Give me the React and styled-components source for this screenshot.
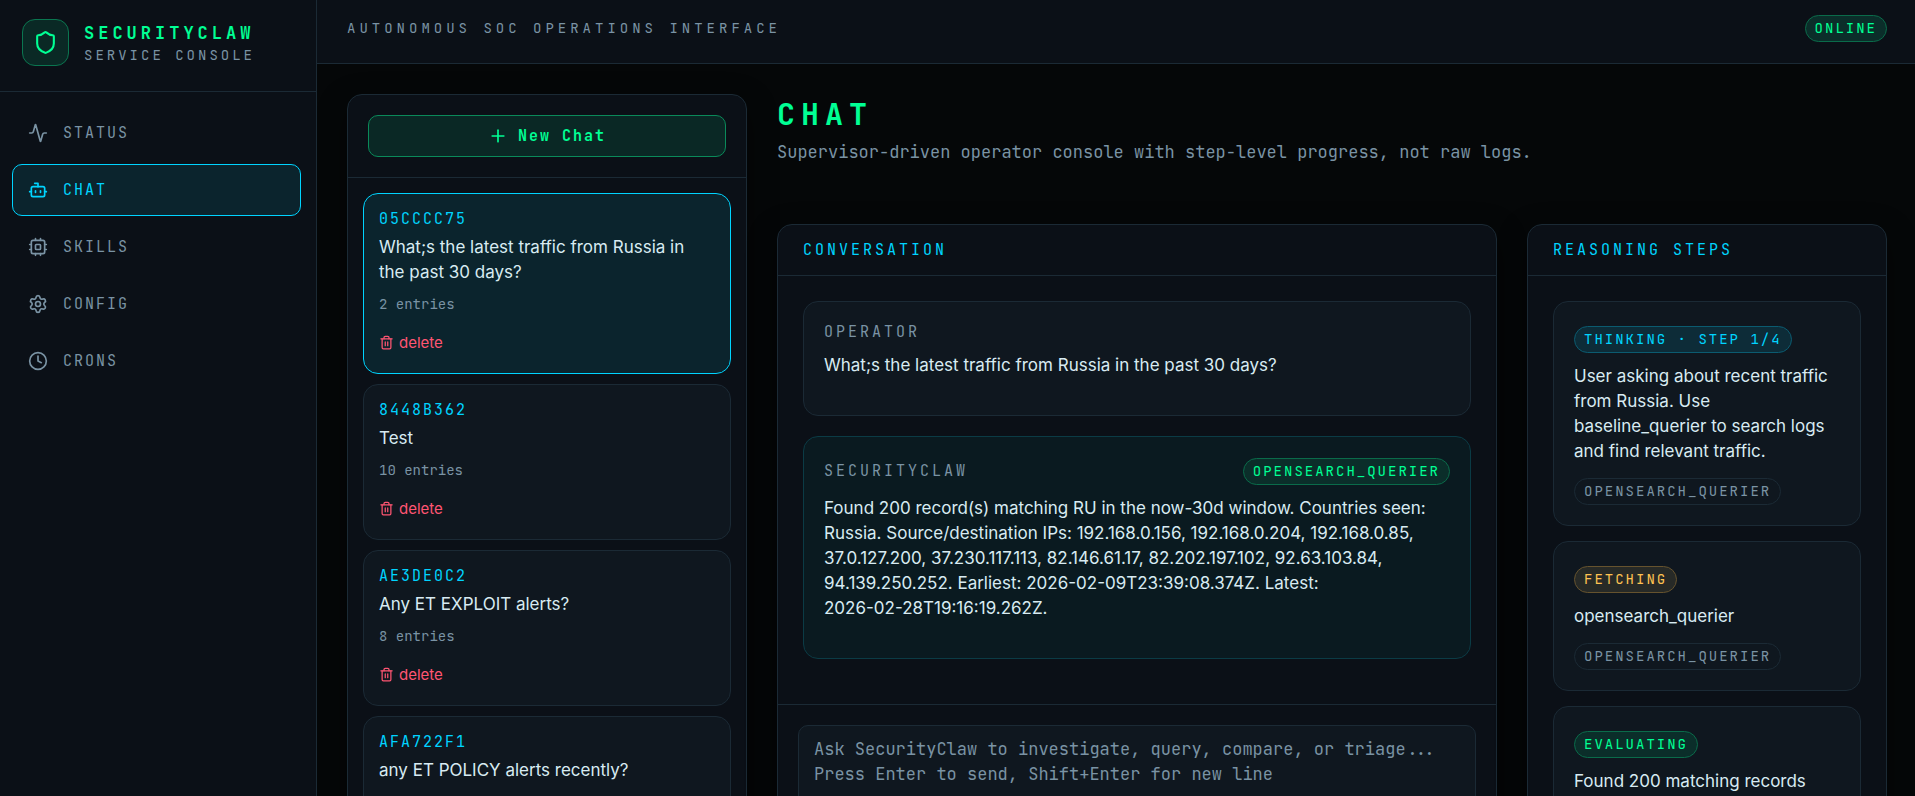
import React, { useState } from 'react';
import styled, { createGlobalStyle, css } from 'styled-components';
import { Activity, Bot, Clock, Cpu, Plus, Settings, Shield, Trash2 } from 'lucide-react';

const colors = {
  bg: '#050708',
  panel: '#0b1017',
  card: '#0f171f',
  border: '#1b2a35',
  text: '#d8ebf2',
  muted: '#7a93a4',
  cyan: '#00d4ff',
  green: '#00ff94',
  amber: '#ffc252',
  red: '#ff5572',
};

const mono = `'JetBrains Mono', 'DejaVu Sans Mono', 'Liberation Mono', monospace`;
const sans = `Inter, 'Liberation Sans', sans-serif`;

const GlobalStyle = createGlobalStyle`
  * {
    box-sizing: border-box;
  }

  body {
    margin: 0;
    background: ${colors.bg};
    color: ${colors.text};
    font-family: ${sans};
    font-size: 17px;
    line-height: 25px;
  }

  button, textarea {
    font: inherit;
  }

  h1, h2, p {
    margin: 0;
  }
`;

const Shell = styled.div`
  display: flex;
  height: 100vh;
  overflow: hidden;
`;

// sidebar

const Sidebar = styled.aside`
  width: 317px;
  flex-shrink: 0;
  background: ${colors.panel};
  border-right: 1px solid ${colors.border};
`;

const Brand = styled.div`
  display: flex;
  align-items: center;
  gap: 15px;
  padding: 19px 22px 25px;
  border-bottom: 1px solid ${colors.border};
`;

const BrandIcon = styled.div`
  display: flex;
  align-items: center;
  justify-content: center;
  width: 47px;
  height: 47px;
  border: 1px solid #0a7650;
  border-radius: 13px;
  background: #0a2925;
  color: ${colors.green};
`;

const BrandName = styled.div`
  font-family: ${mono};
  font-weight: 700;
  line-height: 24px;
  letter-spacing: 4px;
  color: ${colors.green};
`;

const BrandSub = styled.div`
  font-family: ${mono};
  font-size: 14px;
  line-height: 20px;
  letter-spacing: 3px;
  color: ${colors.muted};
`;

const Nav = styled.nav`
  display: flex;
  flex-direction: column;
  gap: 5px;
  padding: 15px 15px 15px 12px;
`;

const NavLink = styled.a`
  display: flex;
  align-items: center;
  gap: 15px;
  height: 52px;
  padding: 0 15px;
  border: 1px solid transparent;
  border-radius: 10px;
  font-family: ${mono};
  font-size: 15px;
  letter-spacing: 2px;
  text-decoration: none;
  color: ${colors.muted};

  ${({ $active }) => $active && css`
    color: ${colors.cyan};
    border-color: ${colors.cyan};
    background: #0b242d;
  `}
`;

// top bar

const Content = styled.div`
  flex: 1;
  min-width: 0;
  display: flex;
  flex-direction: column;
`;

const TopBar = styled.header`
  display: flex;
  align-items: center;
  justify-content: space-between;
  flex-shrink: 0;
  padding: 15px 28px 21px 30px;
  background: ${colors.panel};
  border-bottom: 1px solid ${colors.border};
`;

const TopTitle = styled.div`
  font-family: ${mono};
  font-size: 14px;
  letter-spacing: 4px;
  color: ${colors.muted};
`;

const tones = {
  green: css`
    color: ${colors.green};
    background: #0b2e2a;
    border-color: #0a6b4a;
  `,
  cyan: css`
    color: ${colors.cyan};
    background: #0d2c38;
    border-color: #0b5b70;
  `,
  amber: css`
    color: ${colors.amber};
    background: #272a27;
    border-color: #66532e;
  `,
  muted: css`
    color: ${colors.muted};
    background: transparent;
    border-color: ${colors.border};
  `,
};

const Badge = styled.span`
  display: flex;
  align-items: center;
  width: fit-content;
  height: 27px;
  padding: 0 9px;
  border: 1px solid;
  border-radius: 14px;
  font-family: ${mono};
  font-size: 14px;
  letter-spacing: 2px;
  white-space: nowrap;
  ${({ $tone }) => tones[$tone]}
`;

// page

const Page = styled.main`
  flex: 1;
  min-height: 0;
  display: flex;
  align-items: flex-start;
  gap: 30px;
  padding: 30px 28px 30px 30px;
  overflow: auto;
  scrollbar-width: none;
`;

const Panel = styled.section`
  min-width: 0;
  background: ${colors.panel};
  border: 1px solid ${colors.border};
  border-radius: 15px;
  box-shadow: 0 10px 30px rgba(0, 0, 0, .45);
`;

const SessionPanel = styled(Panel)`
  width: 400px;
  flex-shrink: 0;
`;

const SessionHead = styled.div`
  padding: 20px;
  border-bottom: 1px solid ${colors.border};
`;

const NewChat = styled.button`
  display: flex;
  align-items: center;
  justify-content: center;
  gap: 10px;
  width: 100%;
  height: 42px;
  padding: 0;
  border: 1px solid #0a8a5a;
  border-radius: 10px;
  background: #0a2825;
  color: ${colors.green};
  font-family: ${mono};
  font-size: 15px;
  font-weight: 700;
  letter-spacing: 2px;
  cursor: pointer;
`;

const SessionList = styled.div`
  display: flex;
  flex-direction: column;
  gap: 10px;
  padding: 15px;
`;

const Session = styled.article`
  padding: 15px 15px 16px;
  border: 1px solid ${({ $active }) => $active ? colors.cyan : colors.border};
  border-radius: 15px;
  background: ${({ $active }) => $active ? '#0b242d' : colors.card};
  cursor: pointer;
`;

const SessionId = styled.div`
  font-family: ${mono};
  font-size: 15px;
  line-height: 20px;
  letter-spacing: 2px;
  color: ${colors.cyan};
`;

const SessionTitle = styled.p`
  margin-top: 6px;
  padding-right: 15px;
`;

const SessionMeta = styled.div`
  margin-top: 9px;
  font-family: ${mono};
  font-size: 14px;
  line-height: 20px;
  color: ${colors.muted};
`;

const DeleteButton = styled.button`
  display: flex;
  align-items: center;
  gap: 5px;
  height: 30px;
  margin-top: 13px;
  padding: 0;
  border: 0;
  background: none;
  color: ${colors.red};
  font-size: 15px;
  cursor: pointer;
`;

const Workspace = styled.div`
  flex: 1;
  min-width: 0;
`;

const PageTitle = styled.h1`
  font-family: ${mono};
  font-size: 30px;
  line-height: 40px;
  letter-spacing: 6px;
  color: ${colors.green};
`;

const PageSub = styled.p`
  margin: 6px 0 59px;
  font-family: ${mono};
  color: ${colors.muted};
`;

const Columns = styled.div`
  display: grid;
  grid-template-columns: 2fr 1fr;
  gap: 30px;
  align-items: stretch;
`;

const PanelTitle = styled.h2`
  padding: 0 25px;
  border-bottom: 1px solid ${colors.border};
  font-family: ${mono};
  font-size: 15px;
  font-weight: 400;
  line-height: 50px;
  letter-spacing: 3px;
  color: ${colors.cyan};
`;

const Messages = styled.div`
  display: flex;
  flex-direction: column;
  gap: 20px;
  padding: 25px 25px 45px;
`;

const Message = styled.article`
  padding: 20px 20px 37px;
  border: 1px solid ${({ $agent }) => $agent ? '#0b3b45' : colors.border};
  border-radius: 15px;
  background: ${({ $agent }) => $agent ? '#0a1a20' : colors.card};
`;

const MessageHead = styled.div`
  display: flex;
  align-items: center;
  justify-content: space-between;
  margin-bottom: 11px;
  min-height: ${({ $tall }) => $tall ? 28 : 20}px;
`;

const MessageText = styled.p`
  white-space: pre-line;
`;

const Author = styled.span`
  font-family: ${mono};
  font-size: 15px;
  line-height: 20px;
  letter-spacing: 3px;
  color: ${colors.muted};
`;

const Composer = styled.form`
  display: flex;
  padding: 20px;
  border-top: 1px solid ${colors.border};
`;

const Prompt = styled.textarea`
  flex: 1;
  min-width: 0;
  height: 120px;
  padding: 11px 15px;
  border: 1px solid ${colors.border};
  border-radius: 10px;
  outline: none;
  resize: none;
  background: ${colors.card};
  color: ${colors.text};
  font-family: ${mono};

  &::placeholder {
    color: ${colors.muted};
    opacity: 1;
  }
`;

const Steps = styled.div`
  display: flex;
  flex-direction: column;
  gap: 15px;
  padding: 25px;
`;

const Step = styled.article`
  padding: 24px 20px 20px;
  border: 1px solid ${colors.border};
  border-radius: 15px;
  background: ${colors.card};
`;

const StepText = styled.p`
  margin: 11px 0 14px;
`;

const navItems = [
  { label: 'STATUS', icon: Activity },
  { label: 'CHAT', icon: Bot },
  { label: 'SKILLS', icon: Cpu },
  { label: 'CONFIG', icon: Settings },
  { label: 'CRONS', icon: Clock },
];

const sessions = [
  { id: '05CCCC75', title: 'What;s the latest traffic from Russia in the past 30 days?', entries: 2 },
  { id: '8448B362', title: 'Test', entries: 10 },
  { id: 'AE3DE0C2', title: 'Any ET EXPLOIT alerts?', entries: 8 },
  { id: 'AFA722F1', title: 'any ET POLICY alerts recently?' },
];

const messages = [
  { author: 'OPERATOR', text: 'What;s the latest traffic from Russia in the past 30 days?' },
  {
    author: 'SECURITYCLAW',
    skill: 'OPENSEARCH_QUERIER',
    text: 'Found 200 record(s) matching RU in the now-30d window. Countries seen: Russia. Source/destination IPs: 192.168.0.156, 192.168.0.204, 192.168.0.85, 37.0.127.200, 37.230.117.113, 82.146.61.17, 82.202.197.102, 92.63.103.84, 94.139.250.252. Earliest: 2026-02-09T23:39:08.374Z. Latest:\n2026-02-28T19:16:19.262Z.',
  },
];

const steps = [
  {
    label: 'THINKING · STEP 1/4',
    tone: 'cyan',
    text: 'User asking about recent traffic from Russia. Use baseline_querier to search logs and find relevant traffic.',
  },
  { label: 'FETCHING', tone: 'amber', text: 'opensearch_querier' },
  { label: 'EVALUATING', tone: 'green', text: 'Found 200 matching records' },
];

const App = () => {
  const [active, setActive] = useState('05CCCC75');
  const [draft, setDraft] = useState('');

  return (
    <>
      <GlobalStyle />
      <Shell>
        <Sidebar>
          <Brand>
            <BrandIcon>
              <Shield size={25} />
            </BrandIcon>
            <div>
              <BrandName>SECURITYCLAW</BrandName>
              <BrandSub>SERVICE CONSOLE</BrandSub>
            </div>
          </Brand>
          <Nav>
            {navItems.map(({ label, icon: Icon }) =>
              <NavLink key={label} href={`#${label.toLowerCase()}`} $active={label === 'CHAT'}>
                {/* the chip is drawn with a single outline and a small core */}
                {label === 'SKILLS' ?
                  <svg width="20" height="20" viewBox="0 0 24 24" fill="none" stroke="currentColor" strokeWidth="2" strokeLinecap="round" strokeLinejoin="round">
                    <rect x="4" y="4" width="16" height="16" rx="2" />
                    <rect x="9" y="9" width="6" height="6" rx="1" />
                    <path d="M15 2v2M15 20v2M2 15h2M2 9h2M20 15h2M20 9h2M9 2v2M9 20v2" />
                  </svg> : <Icon size={20} />
                }
                {label}
              </NavLink>
            )}
          </Nav>
        </Sidebar>
        <Content>
          <TopBar>
            <TopTitle>AUTONOMOUS SOC OPERATIONS INTERFACE</TopTitle>
            <Badge $tone="green">ONLINE</Badge>
          </TopBar>
          <Page>
            <SessionPanel>
              <SessionHead>
                <NewChat type="button">
                  <Plus size={20} />
                  New Chat
                </NewChat>
              </SessionHead>
              <SessionList>
                {sessions.map((item) =>
                  <Session key={item.id} $active={item.id === active} onClick={() => setActive(item.id)}>
                    <SessionId>{item.id}</SessionId>
                    <SessionTitle>{item.title}</SessionTitle>
                    {item.entries ? <SessionMeta>{`${item.entries} entries`}</SessionMeta> : null}
                    <DeleteButton type="button">
                      <Trash2 size={15} />
                      delete
                    </DeleteButton>
                  </Session>
                )}
              </SessionList>
            </SessionPanel>
            <Workspace>
              <PageTitle>CHAT</PageTitle>
              <PageSub>Supervisor-driven operator console with step-level progress, not raw logs.</PageSub>
              <Columns>
                <Panel>
                  <PanelTitle>CONVERSATION</PanelTitle>
                  <Messages>
                    {messages.map(({ author, skill, text }) =>
                      <Message key={author} $agent={Boolean(skill)}>
                        <MessageHead $tall={Boolean(skill)}>
                          <Author>{author}</Author>
                          {skill ? <Badge $tone="green">{skill}</Badge> : null}
                        </MessageHead>
                        <MessageText>{text}</MessageText>
                      </Message>
                    )}
                  </Messages>
                  <Composer>
                    <Prompt
                      aria-label="Message"
                      value={draft}
                      onChange={(e) => setDraft(e.target.value)}
                      placeholder={'Ask SecurityClaw to investigate, query, compare, or triage...\nPress Enter to send, Shift+Enter for new line'}
                    />
                  </Composer>
                </Panel>
                <Panel>
                  <PanelTitle>REASONING STEPS</PanelTitle>
                  <Steps>
                    {steps.map(({ label, tone, text }) =>
                      <Step key={label}>
                        <Badge $tone={tone}>{label}</Badge>
                        <StepText>{text}</StepText>
                        <Badge $tone="muted">OPENSEARCH_QUERIER</Badge>
                      </Step>
                    )}
                  </Steps>
                </Panel>
              </Columns>
            </Workspace>
          </Page>
        </Content>
      </Shell>
    </>
  );
};

export default App;
